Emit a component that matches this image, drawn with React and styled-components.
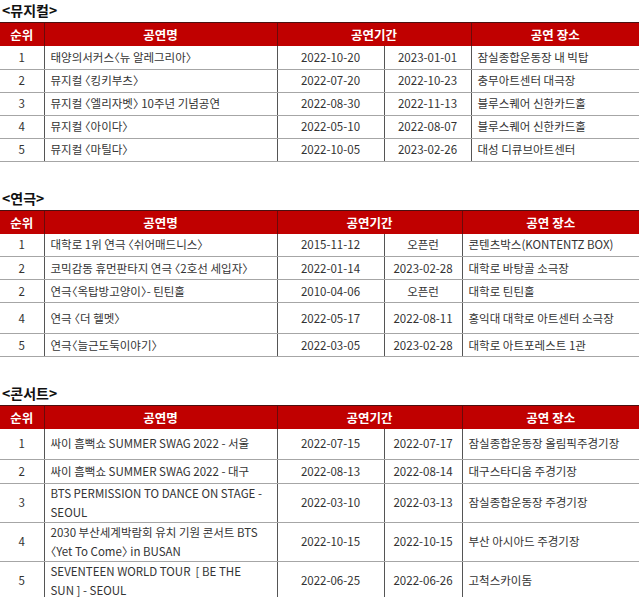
import React from "react";
import styled, { createGlobalStyle } from "styled-components";

const GlobalStyle = createGlobalStyle`
  html, body {
    margin: 0;
    padding: 0;
    background: #ffffff;
  }
  body {
    font-family: "Noto Sans CJK KR", "Noto Sans", sans-serif;
  }
`;

const sections = [
  {
    title: "<뮤지컬>",
    cols: [44, 233, 107, 87, 168],
    rows: [
      { rank: "1", name: "태양의서커스〈뉴 알레그리아〉", start: "2022-10-20", end: "2023-01-01", place: "잠실종합운동장 내 빅탑", h: 23 },
      { rank: "2", name: "뮤지컬 〈킹키부츠〉", start: "2022-07-20", end: "2022-10-23", place: "충무아트센터 대극장", h: 23 },
      { rank: "3", name: "뮤지컬 〈엘리자벳〉 10주년 기념공연", start: "2022-08-30", end: "2022-11-13", place: "블루스퀘어 신한카드홀", h: 23 },
      { rank: "4", name: "뮤지컬 〈아이다〉", start: "2022-05-10", end: "2022-08-07", place: "블루스퀘어 신한카드홀", h: 23 },
      { rank: "5", name: "뮤지컬 〈마틸다〉", start: "2022-10-05", end: "2023-02-26", place: "대성 디큐브아트센터", h: 23 },
    ],
  },
  {
    title: "<연극>",
    cols: [44, 233, 107, 78, 177],
    rows: [
      { rank: "1", name: "대학로 1위 연극 〈쉬어매드니스〉", start: "2015-11-12", end: "오픈런", place: "콘텐츠박스(KONTENTZ BOX)", h: 23 },
      { rank: "2", name: "코믹감동 휴먼판타지 연극 〈2호선 세입자〉", start: "2022-01-14", end: "2023-02-28", place: "대학로 바탕골 소극장", h: 23 },
      { rank: "2", name: "연극〈옥탑방고양이〉- 틴틴홀", start: "2010-04-06", end: "오픈런", place: "대학로 틴틴홀", h: 23 },
      { rank: "4", name: "연극 〈더 헬멧〉", start: "2022-05-17", end: "2022-08-11", place: "홍익대 대학로 아트센터 소극장", h: 31 },
      { rank: "5", name: "연극〈늘근도둑이야기〉", start: "2022-03-05", end: "2023-02-28", place: "대학로 아트포레스트 1관", h: 23 },
    ],
  },
  {
    title: "<콘서트>",
    cols: [44, 233, 107, 78, 177],
    rows: [
      { rank: "1", name: "싸이 흠뻑쇼 SUMMER SWAG 2022 - 서울", start: "2022-07-15", end: "2022-07-17", place: "잠실종합운동장 올림픽주경기장", h: 30 },
      { rank: "2", name: "싸이 흠뻑쇼 SUMMER SWAG 2022 - 대구", start: "2022-08-13", end: "2022-08-14", place: "대구스타디움 주경기장", h: 24 },
      { rank: "3", name: "BTS PERMISSION TO DANCE ON STAGE -\nSEOUL", start: "2022-03-10", end: "2022-03-13", place: "잠실종합운동장 주경기장", h: 38 },
      { rank: "4", name: "2030 부산세계박람회 유치 기원 콘서트 BTS\n〈Yet To Come〉 in BUSAN", start: "2022-10-15", end: "2022-10-15", place: "부산 아시아드 주경기장", h: 38 },
      { rank: "5", name: "SEVENTEEN WORLD TOUR  [ BE THE\nSUN ] - SEOUL", start: "2022-06-25", end: "2022-06-26", place: "고척스카이돔", h: 39 },
    ],
  },
];

function App() {
  return (
    <Page>
      <GlobalStyle />
      {sections.map((section) => (
        <Section key={section.title}>
          <Title>{section.title}</Title>
          <Table>
            <colgroup>
              {section.cols.map((w, i) => (
                <col key={i} style={{ width: w }} />
              ))}
            </colgroup>
            <thead>
              <tr>
                <HeadCell>순위</HeadCell>
                <HeadCell>공연명</HeadCell>
                <HeadCell colSpan={2}>공연기간</HeadCell>
                <HeadCell>공연 장소</HeadCell>
              </tr>
            </thead>
            <tbody>
              {section.rows.map((row, i) => (
                <Row key={i} $h={row.h}>
                  <Cell $align="center">{row.rank}</Cell>
                  <Cell>{row.name}</Cell>
                  <Cell $align="center">{row.start}</Cell>
                  <Cell $align="center">{row.end}</Cell>
                  <Cell>{row.place}</Cell>
                </Row>
              ))}
            </tbody>
          </Table>
        </Section>
      ))}
    </Page>
  );
}

export default App;

const Page = styled.div`
  width: 639px;
  display: flex;
  flex-direction: column;
  gap: 26px;
  overflow: hidden;
`;

const Section = styled.div`
  display: flex;
  flex-direction: column;
`;

const Title = styled.div`
  height: 22px;
  line-height: 20px;
  padding-left: 2px;
  font-size: 14px;
  font-weight: 700;
  color: #111111;
`;

const Table = styled.table`
  width: 639px;
  table-layout: fixed;
  border-collapse: collapse;
  font-size: 11.5px;
  color: #333333;
  font-feature-settings: "halt";
`;

const HeadCell = styled.th`
  height: 23px;
  padding: 0;
  background: #c00000;
  color: #ffffff;
  font-size: 12.5px;
  font-weight: 700;
  text-align: center;
  border-top: 1px solid #4a1010;
  border-left: 1px solid #6a0a0a;
  &:first-child {
    border-left: none;
  }
`;

const Row = styled.tr`
  height: ${(p) => p.$h}px;
`;

const Cell = styled.td`
  padding: 0 6px;
  text-align: ${(p) => p.$align || "left"};
  vertical-align: middle;
  line-height: 19px;
  white-space: pre-wrap;
  border-bottom: 1px solid #a6a6a6;
  border-left: 1px solid #555555;
  overflow: hidden;
  &:first-child {
    border-left: none;
  }
`;
